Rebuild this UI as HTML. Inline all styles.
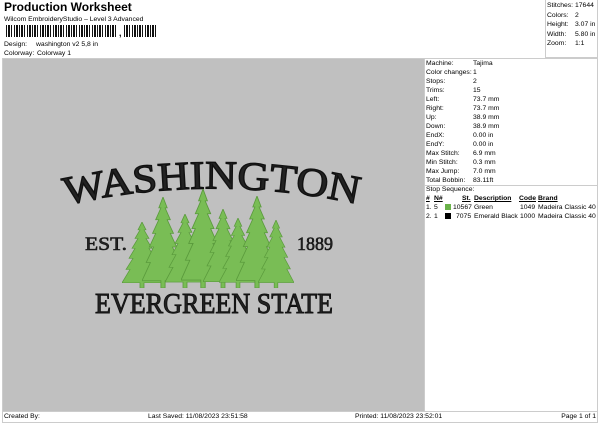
<!DOCTYPE html>
<html><head><meta charset="utf-8"><style>
*{margin:0;padding:0;box-sizing:border-box}
body{width:600px;height:424px;background:#fff;font-family:"Liberation Sans",sans-serif;color:#000;position:relative;overflow:hidden}
.a{position:absolute;white-space:nowrap;font-size:6.8px;line-height:9px}
.bc{position:absolute;top:25px;height:12px;background:repeating-linear-gradient(90deg,#111 0 1px,#fff 1px 2px,#111 2px 4px,#fff 4px 5px,#111 5px 6px,#fff 6px 8px,#111 8px 9px,#fff 9px 10px,#111 10px 12px,#fff 12px 13px)}
</style></head><body>
<div class="a" style="left:4px;top:1px;font-size:12px;line-height:13px;font-weight:bold">Production Worksheet</div>
<div class="a" style="left:4px;top:15px">Wilcom EmbroideryStudio – Level 3 Advanced</div>
<div class="bc" style="left:6px;width:112px"></div>
<div class="a" style="left:119px;top:29px;font-weight:bold;font-size:9px">,</div>
<div class="bc" style="left:124px;width:34px"></div>
<div class="a" style="left:4px;top:40px">Design:</div><div class="a" style="left:36px;top:40px">washington v2 5,8 in</div>
<div class="a" style="left:4px;top:49px">Colorway:</div><div class="a" style="left:37px;top:49px">Colorway 1</div>

<div style="position:absolute;left:545px;top:0;width:53px;height:58px;border:1px solid #ccc;border-top:none"></div>
<div class="a" style="left:547px;top:1px">Stitches:</div><div class="a" style="left:575px;top:1px">17644</div>
<div class="a" style="left:547px;top:11px">Colors:</div><div class="a" style="left:575px;top:11px">2</div>
<div class="a" style="left:547px;top:20px">Height:</div><div class="a" style="left:575px;top:20px">3.07 in</div>
<div class="a" style="left:547px;top:30px">Width:</div><div class="a" style="left:575px;top:30px">5.80 in</div>
<div class="a" style="left:547px;top:39px">Zoom:</div><div class="a" style="left:575px;top:39px">1:1</div>

<div style="position:absolute;left:2px;top:58px;width:596px;height:1px;background:#ccc"></div>
<div style="position:absolute;left:3px;top:59px;width:421px;height:352px;background:#c0c0c0"></div>
<div style="position:absolute;left:424px;top:59px;width:1px;height:352px;background:#ccc"></div>
<div style="position:absolute;left:597px;top:59px;width:1px;height:364px;background:#ccc"></div>
<div style="position:absolute;left:2px;top:59px;width:1px;height:364px;background:#ccc"></div>

<svg style="position:absolute;left:0;top:0" width="600" height="424">
<defs>
<path id="arc" d="M66 205 Q212 172 362 205"/>
<symbol id="tr" viewBox="0 0 40 100" preserveAspectRatio="none">
<polygon points="20,0 24,12 22,12 27,25 24,25 30,40 27,40 33,55 29,55 36,72 32,72 40,92 22,92 22,100 18,100 18,92 0,92 8,72 4,72 11,55 7,55 13,40 10,40 16,25 13,25 18,12 16,12" fill="#79bd55" stroke="#5a9a3c" stroke-width="0.8"/>
</symbol>
</defs>
<text font-family="Liberation Serif,serif" font-size="40" fill="#222" stroke="#111" stroke-width="1.3"><textPath href="#arc" textLength="294" lengthAdjust="spacingAndGlyphs">WASHINGTON</textPath></text>
<use href="#tr" x="122" y="222" width="40" height="66"/>
<use href="#tr" x="142" y="197" width="42" height="91"/>
<use href="#tr" x="165" y="214" width="40" height="74"/>
<use href="#tr" x="181" y="189" width="44" height="99"/>
<use href="#tr" x="203" y="209" width="40" height="79"/>
<use href="#tr" x="219" y="218" width="38" height="70"/>
<use href="#tr" x="236" y="196" width="42" height="92"/>
<use href="#tr" x="258" y="220" width="36" height="68"/>
<text x="85" y="250" font-family="Liberation Serif,serif" font-size="19" fill="#222" stroke="#111" stroke-width="0.6" textLength="42" lengthAdjust="spacingAndGlyphs">EST.</text>
<text x="297" y="250" font-family="Liberation Serif,serif" font-size="19" fill="#222" stroke="#111" stroke-width="0.6" textLength="36" lengthAdjust="spacingAndGlyphs">1889</text>
<text x="95" y="313" font-family="Liberation Serif,serif" font-size="28" fill="#222" stroke="#111" stroke-width="0.9" textLength="238" lengthAdjust="spacingAndGlyphs">EVERGREEN STATE</text>
</svg>

<div class="a" style="left:426px;top:59px">Machine:</div><div class="a" style="left:473px;top:59px">Tajima</div>
<div class="a" style="left:426px;top:68px">Color changes:</div><div class="a" style="left:473px;top:68px">1</div>
<div class="a" style="left:426px;top:77px">Stops:</div><div class="a" style="left:473px;top:77px">2</div>
<div class="a" style="left:426px;top:86px">Trims:</div><div class="a" style="left:473px;top:86px">15</div>
<div class="a" style="left:426px;top:95px">Left:</div><div class="a" style="left:473px;top:95px">73.7 mm</div>
<div class="a" style="left:426px;top:104px">Right:</div><div class="a" style="left:473px;top:104px">73.7 mm</div>
<div class="a" style="left:426px;top:113px">Up:</div><div class="a" style="left:473px;top:113px">38.9 mm</div>
<div class="a" style="left:426px;top:122px">Down:</div><div class="a" style="left:473px;top:122px">38.9 mm</div>
<div class="a" style="left:426px;top:131px">EndX:</div><div class="a" style="left:473px;top:131px">0.00 in</div>
<div class="a" style="left:426px;top:140px">EndY:</div><div class="a" style="left:473px;top:140px">0.00 in</div>
<div class="a" style="left:426px;top:149px">Max Stitch:</div><div class="a" style="left:473px;top:149px">6.9 mm</div>
<div class="a" style="left:426px;top:158px">Min Stitch:</div><div class="a" style="left:473px;top:158px">0.3 mm</div>
<div class="a" style="left:426px;top:167px">Max Jump:</div><div class="a" style="left:473px;top:167px">7.0 mm</div>
<div class="a" style="left:426px;top:176px">Total Bobbin:</div><div class="a" style="left:473px;top:176px">83.11ft</div>
<div style="position:absolute;left:425px;top:185px;width:172px;height:1px;background:#ccc"></div>
<div class="a" style="left:426px;top:185px">Stop Sequence:</div>
<div class="a" style="left:426px;top:194px;font-weight:bold;text-decoration:underline">#</div>
<div class="a" style="left:434px;top:194px;font-weight:bold;text-decoration:underline">N#</div>
<div class="a" style="left:462px;top:194px;font-weight:bold;text-decoration:underline">St.</div>
<div class="a" style="left:474px;top:194px;font-weight:bold;text-decoration:underline">Description</div>
<div class="a" style="left:519px;top:194px;font-weight:bold;text-decoration:underline">Code</div>
<div class="a" style="left:538px;top:194px;font-weight:bold;text-decoration:underline">Brand</div>
<div class="a" style="left:426px;top:203px">1.</div><div class="a" style="left:434px;top:203px">5</div>
<div style="position:absolute;left:445px;top:204px;width:6px;height:6px;background:#6bb34b"></div>
<div class="a" style="left:453px;top:203px">10567</div><div class="a" style="left:474px;top:203px">Green</div>
<div class="a" style="left:520px;top:203px">1049</div><div class="a" style="left:538px;top:203px">Madeira Classic 40</div>
<div class="a" style="left:426px;top:212px">2.</div><div class="a" style="left:434px;top:212px">1</div>
<div style="position:absolute;left:445px;top:213px;width:6px;height:6px;background:#000"></div>
<div class="a" style="left:456px;top:212px">7075</div><div class="a" style="left:474px;top:212px">Emerald Black</div>
<div class="a" style="left:520px;top:212px">1000</div><div class="a" style="left:538px;top:212px">Madeira Classic 40</div>

<div style="position:absolute;left:2px;top:411px;width:596px;height:1px;background:#ccc"></div>
<div style="position:absolute;left:2px;top:422px;width:596px;height:1px;background:#ccc"></div>
<div class="a" style="left:4px;top:412px">Created By:</div>
<div class="a" style="left:148px;top:412px">Last Saved: 11/08/2023 23:51:58</div>
<div class="a" style="left:355px;top:412px">Printed: 11/08/2023 23:52:01</div>
<div class="a" style="right:4px;top:412px">Page 1 of 1</div>
</body></html>
